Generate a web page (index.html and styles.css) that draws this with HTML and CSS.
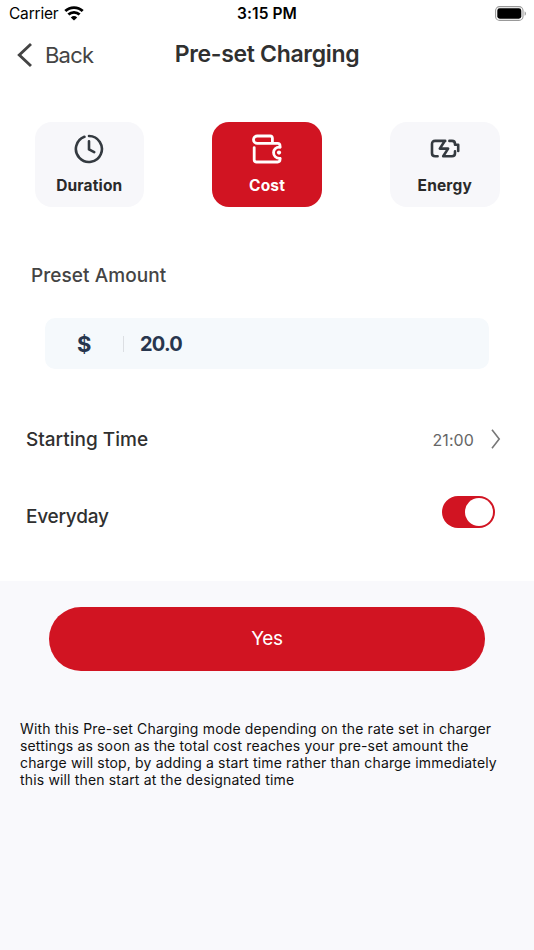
FILE: index.html
```html
<!doctype html>
<html lang="en">
<head>
  <meta charset="UTF-8">
  <title>Pre-set Charging</title>
  <meta name="viewport" content="width=device-width, initial-scale=1">
  <link rel="stylesheet" href="styles.css">
</head>
<body>
  <div class="screen">
    <div class="status-bar">
      <div class="carrier">
        <span>Carrier</span>
        <svg class="wifi" width="20" height="15" viewBox="0 0 20 15">
          <path d="M1.3 5.1a12.4 12.4 0 0 1 17.4 0M4.4 8.6a8 8 0 0 1 11.2 0" fill="none" stroke="#000" stroke-width="2.8"/>
          <path d="M6.8 11.4a4.7 4.7 0 0 1 6.4 0L10 14.6z" fill="#000"/>
        </svg>
      </div>
      <div class="clock">3:15 PM</div>
      <svg class="battery" width="32" height="15" viewBox="0 0 32 15">
        <rect x="0.6" y="0.6" width="27.4" height="13.8" rx="4" fill="#fff" stroke="#999" stroke-width="1.1"/>
        <rect x="2.3" y="2.3" width="24" height="10.4" rx="2.4" fill="#000"/>
        <path d="M29.6 5.2c1.8.8 1.8 3.8 0 4.6z" fill="#999"/>
      </svg>
    </div>

    <div class="nav">
      <a class="back" href="#">
        <svg width="16" height="26" viewBox="0 0 16 26"><path d="M14 2L2.3 13L14 24" fill="none" stroke="#444" stroke-width="2.9"/></svg>
        <span>Back</span>
      </a>
      <h1>Pre-set Charging</h1>
    </div>

    <div class="tabs">
      <button class="tab" type="button">
        <svg width="30" height="30" viewBox="0 0 30 30" fill="none" stroke="#343a40" stroke-width="2.6" stroke-linecap="round" stroke-linejoin="round">
          <path d="M15 2A13 13 0 1 1 10.4 2.8M15 7.2V15.4L20.2 18.2"/>
        </svg>
        <span>Duration</span>
      </button>
      <button class="tab active" type="button">
        <svg width="30" height="30" viewBox="0 0 30 30" fill="none" stroke="#fff" stroke-width="2.8" stroke-linecap="round" stroke-linejoin="round">
          <path d="M20.4 9.4V4.2Q20.4 2 18.2 2H5.2A3.7 3.7 0 0 0 5.2 9.4H25.6Q28 9.4 28 11.8V13.2M2.2 13.6V25.8Q2.2 28 4.4 28H25.6Q28 28 28 25.6V24.4"/>
          <path d="M28 13.2C19.4 12.6 19.4 24.4 28 24.4"/>
          <circle cx="27" cy="18.6" r="2.1" fill="#fff" stroke="none"/>
        </svg>
        <span>Cost</span>
      </button>
      <button class="tab" type="button">
        <svg width="30" height="30" viewBox="0 0 30 30" fill="none" stroke="#343a40" stroke-width="2.6" stroke-linecap="round" stroke-linejoin="round">
          <path d="M15.2 6.9H5.2Q2 6.9 2 10V19.2Q2 22.3 5.2 22.3H7.6M19.4 6.9H22Q25 6.9 25 10V10.8H28.2V16.9M25 17.4V19.2Q25 22.3 22 22.3H13.2L18.1 14.6H9.8L14.6 7.2"/>
        </svg>
        <span>Energy</span>
      </button>
    </div>

    <h2>Preset Amount</h2>
    <div class="amount">
      <span class="currency">$</span>
      <span class="value">20.0</span>
    </div>

    <div class="row time-row">
      <span class="row-label">Starting Time</span>
      <span class="time">21:00</span>
      <svg width="10" height="20" viewBox="0 0 10 20"><path d="M1 .8L8.2 10L1 19.2" fill="none" stroke="#777" stroke-width="1.6"/></svg>
    </div>
    <div class="row every-row">
      <span class="row-label everyday">Everyday</span>
      <div class="switch"><div class="knob"></div></div>
    </div>

    <div class="bottom">
      <button class="confirm" type="button">Yes</button>
      <p>With this Pre-set Charging mode depending on the rate set in charger<br>
        settings as soon as the total cost reaches your pre-set amount the<br>
        charge will stop, by adding a start time rather than charge immediately<br>
        this will then start at the designated time</p>
    </div>
  </div>
</body>
</html>
```

FILE: styles.css
```css
* {
  box-sizing: border-box;
}

body {
  margin: 0;
  background-color: #fff;
  font-family: Inter, "Liberation Sans", sans-serif;
  color: #303030;
}

button {
  border: 0;
  padding: 0;
  font-family: inherit;
}

svg {
  display: block;
  flex-shrink: 0;
}

.screen {
  height: 950px;
  display: flex;
  flex-direction: column;
  overflow: hidden;
}

.status-bar {
  height: 27px;
  padding: 0 7px 0 9px;
  display: grid;
  grid-template-columns: 1fr auto 1fr;
  align-items: center;
  color: #000;
  font-size: 15.5px;
}

.carrier {
  display: flex;
  align-items: center;
  gap: 6px;
  letter-spacing: -0.2px;
}

.wifi {
  margin-top: -1px;
}

.clock {
  margin-right: 2px;
  font-weight: 600;
  letter-spacing: 0.1px;
}

.battery {
  justify-self: end;
  margin-top: -1px;
}

.nav {
  height: 55px;
  padding: 0 17px;
  display: grid;
  grid-template-columns: 1fr auto 1fr;
  align-items: center;
}

.back {
  display: flex;
  align-items: center;
  gap: 12px;
  color: #444;
  font-size: 22px;
  letter-spacing: -0.8px;
  text-decoration: none;
}

h1 {
  margin: -2px 0 0;
  font-size: 23px;
  font-weight: 600;
  letter-spacing: -0.32px;
}

.tabs {
  padding: 40px 34.5px 0;
  display: flex;
  justify-content: space-between;
}

.tab {
  width: 109.5px;
  height: 85px;
  padding-top: 12px;
  display: flex;
  flex-direction: column;
  align-items: center;
  gap: 11px;
  border-radius: 17px;
  background-color: #f7f7fa;
  color: #2a2a2a;
  font-size: 15.5px;
  font-weight: 700;
  letter-spacing: 0.15px;
  line-height: 22px;
}

.active {
  background-color: #d11422;
  color: #fff;
}

h2 {
  margin: 55px 0 0 31px;
  font-size: 19px;
  font-weight: 450;
  letter-spacing: 0.07px;
  line-height: 28px;
  color: #444;
}

.amount {
  height: 51px;
  margin: 28px 45px 0;
  padding-left: 32px;
  display: flex;
  align-items: center;
  border-radius: 10px;
  background-color: #f5f9fc;
  color: #27364e;
  font-size: 20px;
  font-weight: 700;
}

.currency {
  width: 47px;
  height: 16px;
  line-height: 16px;
  border-right: 1px solid #dcdfe3;
  font-size: 22px;
}

.value {
  margin-left: 16px;
  letter-spacing: -0.8px;
}

.row {
  height: 40px;
  padding-left: 26px;
  display: flex;
  align-items: center;
}

.row-label {
  flex: 1;
  font-size: 19px;
  font-weight: 500;
}

.everyday {
  letter-spacing: -0.25px;
}

.time-row {
  margin-top: 50px;
  padding-right: 33px;
}

.time {
  margin: 2px 17px 0 0;
  color: #666;
  font-size: 16px;
  letter-spacing: 0.1px;
}

.every-row {
  margin-top: 37px;
  padding-right: 39px;
}

.switch {
  width: 53px;
  height: 32px;
  margin-top: -8px;
  padding: 2px;
  display: flex;
  justify-content: flex-end;
  border-radius: 16px;
  background-color: #d11422;
}

.knob {
  width: 28px;
  height: 28px;
  border-radius: 50%;
  background-color: #fff;
}

.bottom {
  flex: 1;
  margin-top: 45px;
  padding: 25.5px 20px 0;
  background-color: #f9f9fc;
}

.confirm {
  display: block;
  width: 436px;
  height: 64.5px;
  margin: 0 auto;
  border-radius: 33px;
  background-color: #d11422;
  color: #fff;
  font-size: 19px;
  letter-spacing: -0.3px;
}

p {
  margin: 49px 0 0;
  color: #111;
  font-size: 14px;
  letter-spacing: 0.16px;
  line-height: 17px;
  white-space: nowrap;
}
```
